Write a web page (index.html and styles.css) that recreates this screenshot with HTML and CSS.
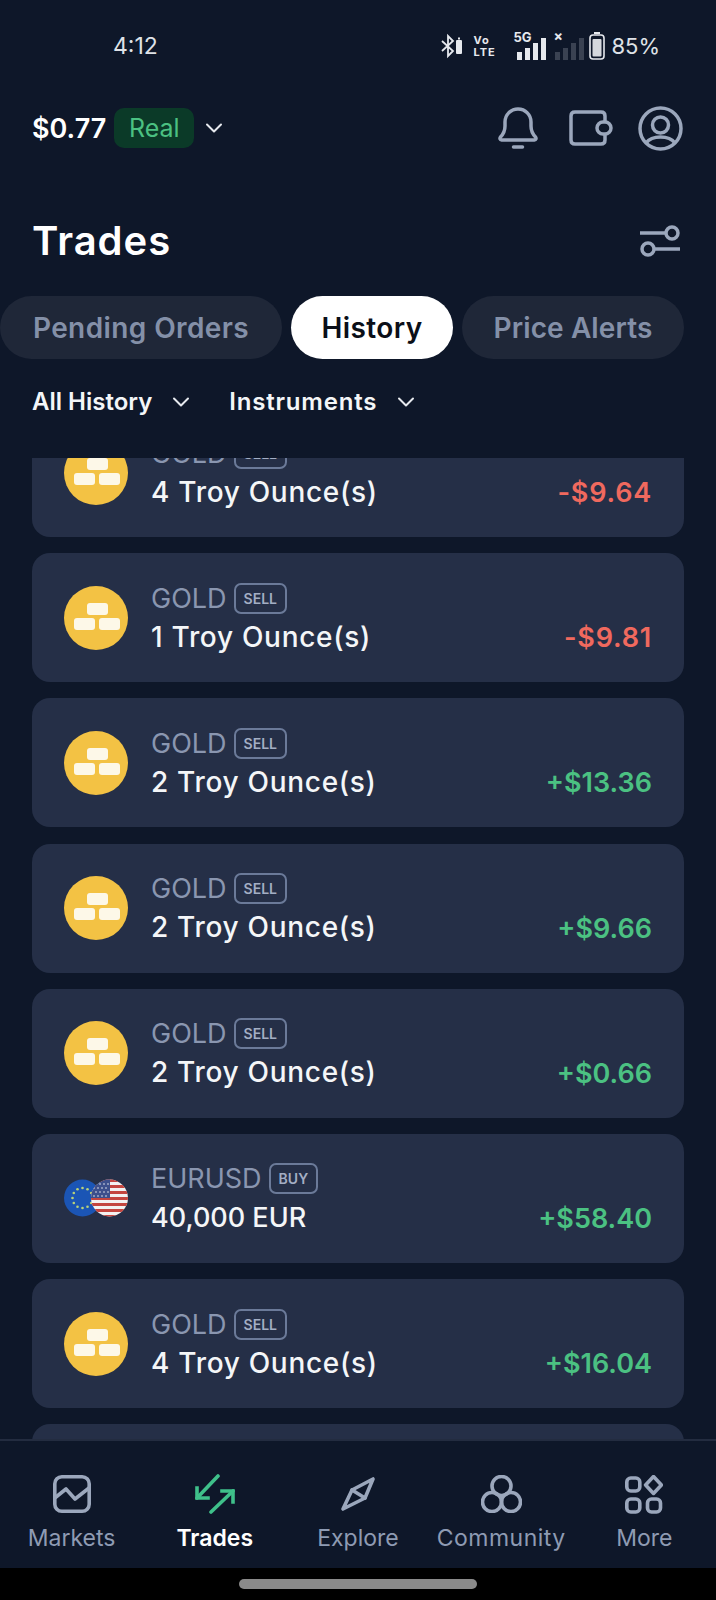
FILE: index.html
```html
<!DOCTYPE html>
<html lang="en">
<head>
    <meta charset="UTF-8">
    <meta name="viewport" content="width=device-width, initial-scale=1.0">
    <title>Trades</title>
    <link rel="stylesheet" href="styles.css">
</head>
<body>
    <svg class="defs" width="0" height="0">
        <symbol id="gold" viewBox="0 0 64 64">
            <circle cx="32" cy="32" r="32" fill="#f3c244"/>
            <rect x="23" y="17" width="21" height="12" rx="3" fill="#fdf8e8"/>
            <rect x="10" y="32" width="21" height="12" rx="3" fill="#fdf8e8"/>
            <rect x="35" y="32" width="21" height="12" rx="3" fill="#fdf8e8"/>
        </symbol>
        <symbol id="chev" viewBox="0 0 20 20">
            <path d="M3 6.5l7 7 7-7" fill="none" stroke="currentColor" stroke-width="2" stroke-linecap="round" stroke-linejoin="round"/>
        </symbol>
    </svg>

    <!-- Status bar -->
    <div class="status-bar">
        <span class="time">4:12</span>
        <div class="status-icons">
            <svg width="24" height="26" viewBox="0 0 24 26" fill="none" stroke="#e6e9ee" stroke-width="1.8">
                <path d="M1 8l11 10-5 5V3l5 5L1 18"/>
                <rect x="15" y="7" width="6" height="14" rx="1" fill="#e6e9ee" stroke="none"/>
                <rect x="17" y="4.5" width="2" height="2" fill="#e6e9ee" stroke="none"/>
            </svg>
            <span class="volte">Vo<br>LTE</span>
            <div class="signal">
                <span class="five-g">5G</span>
                <svg width="30" height="22" viewBox="0 0 30 22" fill="#e6e9ee">
                    <rect x="0" y="14" width="5" height="8"/>
                    <rect x="8" y="10" width="5" height="12"/>
                    <rect x="16" y="5" width="5" height="17"/>
                    <rect x="24" y="0" width="5" height="22"/>
                </svg>
            </div>
            <div class="signal dim">
                <span class="x-mark">×</span>
                <svg width="30" height="22" viewBox="0 0 30 22" fill="#3a4252">
                    <rect x="0" y="14" width="5" height="8"/>
                    <rect x="8" y="10" width="5" height="12"/>
                    <rect x="16" y="5" width="5" height="17"/>
                    <rect x="24" y="0" width="5" height="22"/>
                </svg>
            </div>
            <svg width="16" height="28" viewBox="0 0 16 28">
                <rect x="5" y="0" width="6" height="2" fill="#e6e9ee"/>
                <rect x="1" y="3" width="14" height="24" rx="3" fill="none" stroke="#e6e9ee" stroke-width="1.6"/>
                <rect x="3.5" y="7" width="9" height="17.5" rx="1" fill="#d5d8dd"/>
            </svg>
            <span class="battery">85%</span>
        </div>
    </div>

    <!-- Account header -->
    <div class="top-bar">
        <div class="account">
            <span class="balance">$0.77</span>
            <span class="real">Real</span>
            <svg class="chev-sm" width="20" height="20"><use href="#chev"/></svg>
        </div>
        <div class="top-icons">
            <svg class="icon-bell" width="40" height="42" viewBox="0 0 40 42" fill="none" stroke="#9ba7bc" stroke-linecap="round" stroke-linejoin="round">
                <path d="M2.5 30c3-3 4.5-6 4.5-11v-4C7 8 12.5 2 20 2s13 6 13 13v4c0 5 1.5 8 4.5 11 1 1.5.5 3-1 3h-33c-1.500 0-2-1.500-1-3z"/>
                <path d="M15.5 40h9"/>
            </svg>
            <svg class="icon-wallet" width="44" height="36" viewBox="0 0 44 36" fill="none" stroke="#9ba7bc" stroke-linejoin="round">
                <path d="M36 12V6c0-2.5-1.5-4-4-4H6C3.5 2 2 3.5 2 6v24c0 2.5 1.5 4 4 4h26c2.5 0 4-1.5 4-4v-6"/>
                <rect x="28" y="12" width="14" height="12" rx="6"/>
            </svg>
            <svg width="45" height="45" viewBox="0 0 45 45" fill="none" stroke="#9ba7bc">
                <circle cx="22.5" cy="22.5" r="20.5"/>
                <circle cx="22.5" cy="19" r="8"/>
                <path d="M8 37c3-4 8-6 14.5-6s11.500 2 14.500 6"/>
            </svg>
        </div>
    </div>

    <div class="title-row">
        <h1>Trades</h1>
        <svg width="40" height="32" viewBox="0 0 40 32" fill="none" stroke="#9ba7bc" stroke-width="3.5" stroke-linecap="butt">
            <path d="M0 8h26"/>
            <circle cx="32" cy="8" r="6"/>
            <path d="M14 24h26"/>
            <circle cx="8" cy="24" r="6"/>
        </svg>
    </div>

    <div class="tabs">
        <span class="tab tab-pending">Pending Orders</span>
        <span class="tab tab-history">History</span>
        <span class="tab tab-alerts">Price Alerts</span>
    </div>

    <div class="filters">
        <span class="filter filter-history">All History <svg width="20" height="20"><use href="#chev"/></svg></span>
        <span class="filter filter-inst">Instruments <svg width="20" height="20"><use href="#chev"/></svg></span>
    </div>

    <!-- Trade history, scrolled part way down -->
    <div class="list">
        <div class="list-inner">
            <div class="card">
                <svg class="coin" width="64" height="64"><use href="#gold"/></svg>
                <div class="info">
                    <div class="name">GOLD <span class="side">SELL</span></div>
                    <div class="qty">4 Troy Ounce(s)</div>
                </div>
                <div class="pnl loss">-$9.64</div>
            </div>
            <div class="card">
                <svg class="coin" width="64" height="64"><use href="#gold"/></svg>
                <div class="info">
                    <div class="name">GOLD <span class="side">SELL</span></div>
                    <div class="qty">1 Troy Ounce(s)</div>
                </div>
                <div class="pnl loss">-$9.81</div>
            </div>
            <div class="card">
                <svg class="coin" width="64" height="64"><use href="#gold"/></svg>
                <div class="info">
                    <div class="name">GOLD <span class="side">SELL</span></div>
                    <div class="qty">2 Troy Ounce(s)</div>
                </div>
                <div class="pnl gain">+$13.36</div>
            </div>
            <div class="card">
                <svg class="coin" width="64" height="64"><use href="#gold"/></svg>
                <div class="info">
                    <div class="name">GOLD <span class="side">SELL</span></div>
                    <div class="qty">2 Troy Ounce(s)</div>
                </div>
                <div class="pnl gain">+$9.66</div>
            </div>
            <div class="card">
                <svg class="coin" width="64" height="64"><use href="#gold"/></svg>
                <div class="info">
                    <div class="name">GOLD <span class="side">SELL</span></div>
                    <div class="qty">2 Troy Ounce(s)</div>
                </div>
                <div class="pnl gain">+$0.66</div>
            </div>
            <div class="card">
                <svg class="coin" width="64" height="64" viewBox="0 0 64 64">
                    <defs>
                        <clipPath id="usClip"><circle cx="45.5" cy="32" r="18.5"/></clipPath>
                    </defs>
                    <circle cx="18.5" cy="32" r="18.5" fill="#1b55b5"/>
                    <g fill="#b9d27a">
                        <circle cx="18.5" cy="22" r="1.3"/><circle cx="23.5" cy="23.3" r="1.3"/><circle cx="27.2" cy="27" r="1.3"/>
                        <circle cx="28.5" cy="32" r="1.3"/><circle cx="27.2" cy="37" r="1.3"/><circle cx="23.5" cy="40.7" r="1.3"/>
                        <circle cx="18.5" cy="42" r="1.3"/><circle cx="13.5" cy="40.7" r="1.3"/><circle cx="9.8" cy="37" r="1.3"/>
                        <circle cx="8.5" cy="32" r="1.3"/><circle cx="9.8" cy="27" r="1.3"/><circle cx="13.5" cy="23.3" r="1.3"/>
                    </g>
                    <g clip-path="url(#usClip)">
                        <rect x="27" y="13" width="37" height="38" fill="#f3f1f1"/>
                        <g fill="#c4453f">
                            <rect x="27" y="13" width="37" height="3"/>
                            <rect x="27" y="19" width="37" height="3"/>
                            <rect x="27" y="25" width="37" height="3"/>
                            <rect x="27" y="31" width="37" height="3"/>
                            <rect x="27" y="37" width="37" height="3"/>
                            <rect x="27" y="43" width="37" height="3"/>
                            <rect x="27" y="49" width="37" height="3"/>
                        </g>
                        <rect x="27" y="13" width="19" height="19" fill="#3c4f8c"/>
                        <g fill="#e6e8f0">
                            <circle cx="32" cy="18" r=".8"/><circle cx="36" cy="18" r=".8"/><circle cx="40" cy="18" r=".8"/><circle cx="44" cy="18" r=".8"/>
                            <circle cx="30" cy="22" r=".8"/><circle cx="34" cy="22" r=".8"/><circle cx="38" cy="22" r=".8"/><circle cx="42" cy="22" r=".8"/>
                            <circle cx="32" cy="26" r=".8"/><circle cx="36" cy="26" r=".8"/><circle cx="40" cy="26" r=".8"/><circle cx="44" cy="26" r=".8"/>
                            <circle cx="30" cy="30" r=".8"/><circle cx="34" cy="30" r=".8"/><circle cx="38" cy="30" r=".8"/><circle cx="42" cy="30" r=".8"/>
                        </g>
                    </g>
                </svg>
                <div class="info">
                    <div class="name">EURUSD <span class="side">BUY</span></div>
                    <div class="qty qty-fx">40,000 EUR</div>
                </div>
                <div class="pnl gain">+$58.40</div>
            </div>
            <div class="card">
                <svg class="coin" width="64" height="64"><use href="#gold"/></svg>
                <div class="info">
                    <div class="name">GOLD <span class="side">SELL</span></div>
                    <div class="qty">4 Troy Ounce(s)</div>
                </div>
                <div class="pnl gain">+$16.04</div>
            </div>
            <div class="card"></div>
        </div>
    </div>

    <!-- Bottom navigation -->
    <nav class="bottom-nav">
        <div class="nav-item">
            <div class="nav-icon">
                <svg width="38" height="38" viewBox="0 0 38 38" fill="none" stroke="#9ba7bc" stroke-linejoin="round" stroke-linecap="round">
                    <rect x="1.8" y="1.8" width="34.4" height="34.4" rx="7"/>
                    <path d="M3 22l10-8 9 10 14-11"/>
                </svg>
            </div>
            <span>Markets</span>
        </div>
        <div class="nav-item active">
            <div class="nav-icon">
                <svg width="40" height="40" viewBox="0 0 40 40" fill="none" stroke="#3fc08a" stroke-linecap="round">
                    <path d="M23 2L2 24"/>
                    <path d="M2 14v10h11" stroke-linecap="square" stroke-linejoin="miter"/>
                    <path d="M16 38L38 17"/>
                    <path d="M27 17h11v11" stroke-linecap="square" stroke-linejoin="miter"/>
                </svg>
            </div>
            <span>Trades</span>
        </div>
        <div class="nav-item">
            <div class="nav-icon">
                <svg width="34" height="34" viewBox="0 0 34 34" fill="none" stroke="#9ba7bc" stroke-linejoin="round" stroke-linecap="round">
                    <path d="M32 2L24 21 2 32 11 13z"/>
                    <path d="M11 13l13 8"/>
                </svg>
            </div>
            <span>Explore</span>
        </div>
        <div class="nav-item">
            <div class="nav-icon">
                <svg width="41" height="38" viewBox="0 0 41 38" fill="none" stroke="#9ba7bc">
                    <circle cx="20.5" cy="11" r="9.5"/>
                    <circle cx="11" cy="27" r="9.5"/>
                    <circle cx="30" cy="27" r="9.5"/>
                </svg>
            </div>
            <span>Community</span>
        </div>
        <div class="nav-item">
            <div class="nav-icon">
                <svg width="38" height="39" viewBox="0 0 38 39" fill="none" stroke="#9ba7bc" stroke-linejoin="round">
                    <rect x="1.8" y="3" width="13" height="13" rx="4"/>
                    <path d="M28.5 1.6l7.9 8.4-7.9 8.4-7.900-8.400z"/>
                    <rect x="1.8" y="24" width="13" height="13" rx="4"/>
                    <rect x="22.5" y="24" width="13" height="13" rx="4"/>
                </svg>
            </div>
            <span>More</span>
        </div>
    </nav>

    <div class="gesture-bar"><div class="gesture-pill"></div></div>
</body>
</html>
```

FILE: styles.css
```css
* {
    box-sizing: border-box;
}

body {
    font-family: 'Inter', 'Liberation Sans', sans-serif;
    background-color: #0e1729;
    color: #fff;
    margin: 0;
    height: 1600px;
    width: 716px;
    display: flex;
    flex-direction: column;
    overflow: hidden;
}

.defs {
    position: absolute;
}

.status-bar {
    height: 92px;
    flex: none;
    display: flex;
    align-items: center;
    justify-content: space-between;
    padding: 0 56px 0 113px;
}

.time {
    font-size: 23px;
    color: #dfe2e7;
}

.status-icons {
    display: flex;
    align-items: center;
    gap: 6px;
}

.volte {
    font-size: 11px;
    line-height: 12px;
    font-weight: 700;
    letter-spacing: 1px;
    color: #e6e9ee;
    width: 24px;
    margin-left: 2px;
}

.signal {
    display: flex;
    align-items: flex-end;
    position: relative;
    padding-left: 2px;
    height: 28px;
    margin-left: 12px;
}

.five-g {
    position: absolute;
    left: -2px;
    top: -3px;
    font-size: 13px;
    font-weight: 700;
    color: #e6e9ee;
}

.x-mark {
    position: absolute;
    left: 0;
    top: -5px;
    font-size: 14px;
    font-weight: 700;
    color: #e6e9ee;
}

.signal.dim {
    margin-left: 0;
    margin-right: -2px;
}

.battery {
    font-size: 22px;
    color: #dfe2e7;
}

.top-bar {
    height: 72px;
    flex: none;
    display: flex;
    align-items: center;
    justify-content: space-between;
    padding: 0 33px 0 32px;
}

.account {
    display: flex;
    align-items: center;
}

.balance {
    font-size: 27px;
    font-weight: 600;
    margin-right: 8px;
}

.real {
    background-color: #0b3a28;
    color: #4bc182;
    font-size: 25px;
    height: 40px;
    width: 80px;
    border-radius: 10px;
    display: flex;
    align-items: center;
    justify-content: center;
}

.chev-sm {
    margin-left: 10px;
    color: #e6e9ee;
}

.top-icons {
    display: flex;
    align-items: center;
    stroke-width: 3.5;
}

.icon-wallet {
    margin: 0 25px 0 31px;
}

.title-row {
    height: 75px;
    margin-top: 39px;
    flex: none;
    display: flex;
    align-items: center;
    justify-content: space-between;
    padding: 0 36px 0 32px;
}

h1 {
    margin: 0;
    font-size: 40px;
    font-weight: 600;
    letter-spacing: 1px;
}

.tabs {
    flex: none;
    height: 63px;
    margin-top: 18px;
    display: flex;
    gap: 9px;
}

.tab {
    background-color: #1f2738;
    color: #8490a8;
    font-size: 28px;
    font-weight: 600;
    letter-spacing: 0.4px;
    border-radius: 32px;
    display: flex;
    align-items: center;
    justify-content: center;
}

.tab-pending {
    width: 282px;
}

.tab-history {
    width: 162px;
    background-color: #fff;
    color: #0b0f18;
}

.tab-alerts {
    width: 222px;
    letter-spacing: 0.1px;
}

.filters {
    flex: none;
    height: 99px;
    padding: 0 32px 14px;
    display: flex;
    align-items: center;
    font-size: 24px;
    font-weight: 600;
    color: #f4f6f8;
}

.filter {
    display: flex;
    align-items: center;
    gap: 19px;
}

.filter svg {
    color: #e6e9ee;
}

.filter-history {
    margin-right: 38px;
}

.filter-inst {
    letter-spacing: 0.8px;
}

.list {
    flex: 1;
    min-height: 0;
    overflow: hidden;
    padding: 0 32px;
}

.list-inner {
    margin-top: -50px;
    display: flex;
    flex-direction: column;
    gap: 16.2px;
}

.card {
    height: 129px;
    flex: none;
    background-color: #252f47;
    border-radius: 18px;
    padding: 0 32px;
    display: flex;
    align-items: center;
}

.coin {
    flex: none;
    margin-right: 23px;
}

.info {
    flex: 1;
    padding-top: 2px;
}

.name {
    display: flex;
    align-items: center;
    font-size: 27px;
    line-height: 33px;
    color: #8a96b0;
    gap: 7px;
}

.side {
    font-size: 14px;
    font-weight: 600;
    line-height: 27px;
    padding: 0 8px;
    border: 2px solid #6b7a99;
    border-radius: 7px;
    color: #a3aec4;
}

.qty {
    font-size: 28px;
    line-height: 37px;
    font-weight: 500;
    letter-spacing: 0.7px;
    color: #f4f6f8;
    margin-top: 4px;
}

.qty-fx {
    font-size: 27px;
    letter-spacing: 0;
}

.pnl {
    font-size: 27px;
    font-weight: 600;
    align-self: flex-end;
    margin-bottom: 26px;
    line-height: 37px;
}

.loss {
    color: #f0695e;
    letter-spacing: 0.8px;
}

.gain {
    color: #4bc182;
}

.bottom-nav {
    flex: none;
    height: 129px;
    border-top: 2px solid #232c40;
    background-color: #0e1729;
    display: grid;
    grid-template-columns: repeat(5, 1fr);
    padding-top: 32px;
}

.nav-item {
    display: flex;
    flex-direction: column;
    align-items: center;
    gap: 9px;
    font-size: 23px;
    color: #8e9bb3;
}

.nav-icon {
    height: 42px;
    display: flex;
    align-items: center;
    justify-content: center;
    stroke-width: 3.6;
}

.nav-item:nth-child(4) {
    letter-spacing: 0.5px;
}

.nav-item.active {
    color: #fff;
    font-weight: 600;
}

.gesture-bar {
    flex: none;
    height: 32px;
    background-color: #000;
    display: flex;
    justify-content: center;
    align-items: center;
}

.gesture-pill {
    width: 238px;
    height: 10px;
    border-radius: 5px;
    background-color: #8a8a8a;
}
```
